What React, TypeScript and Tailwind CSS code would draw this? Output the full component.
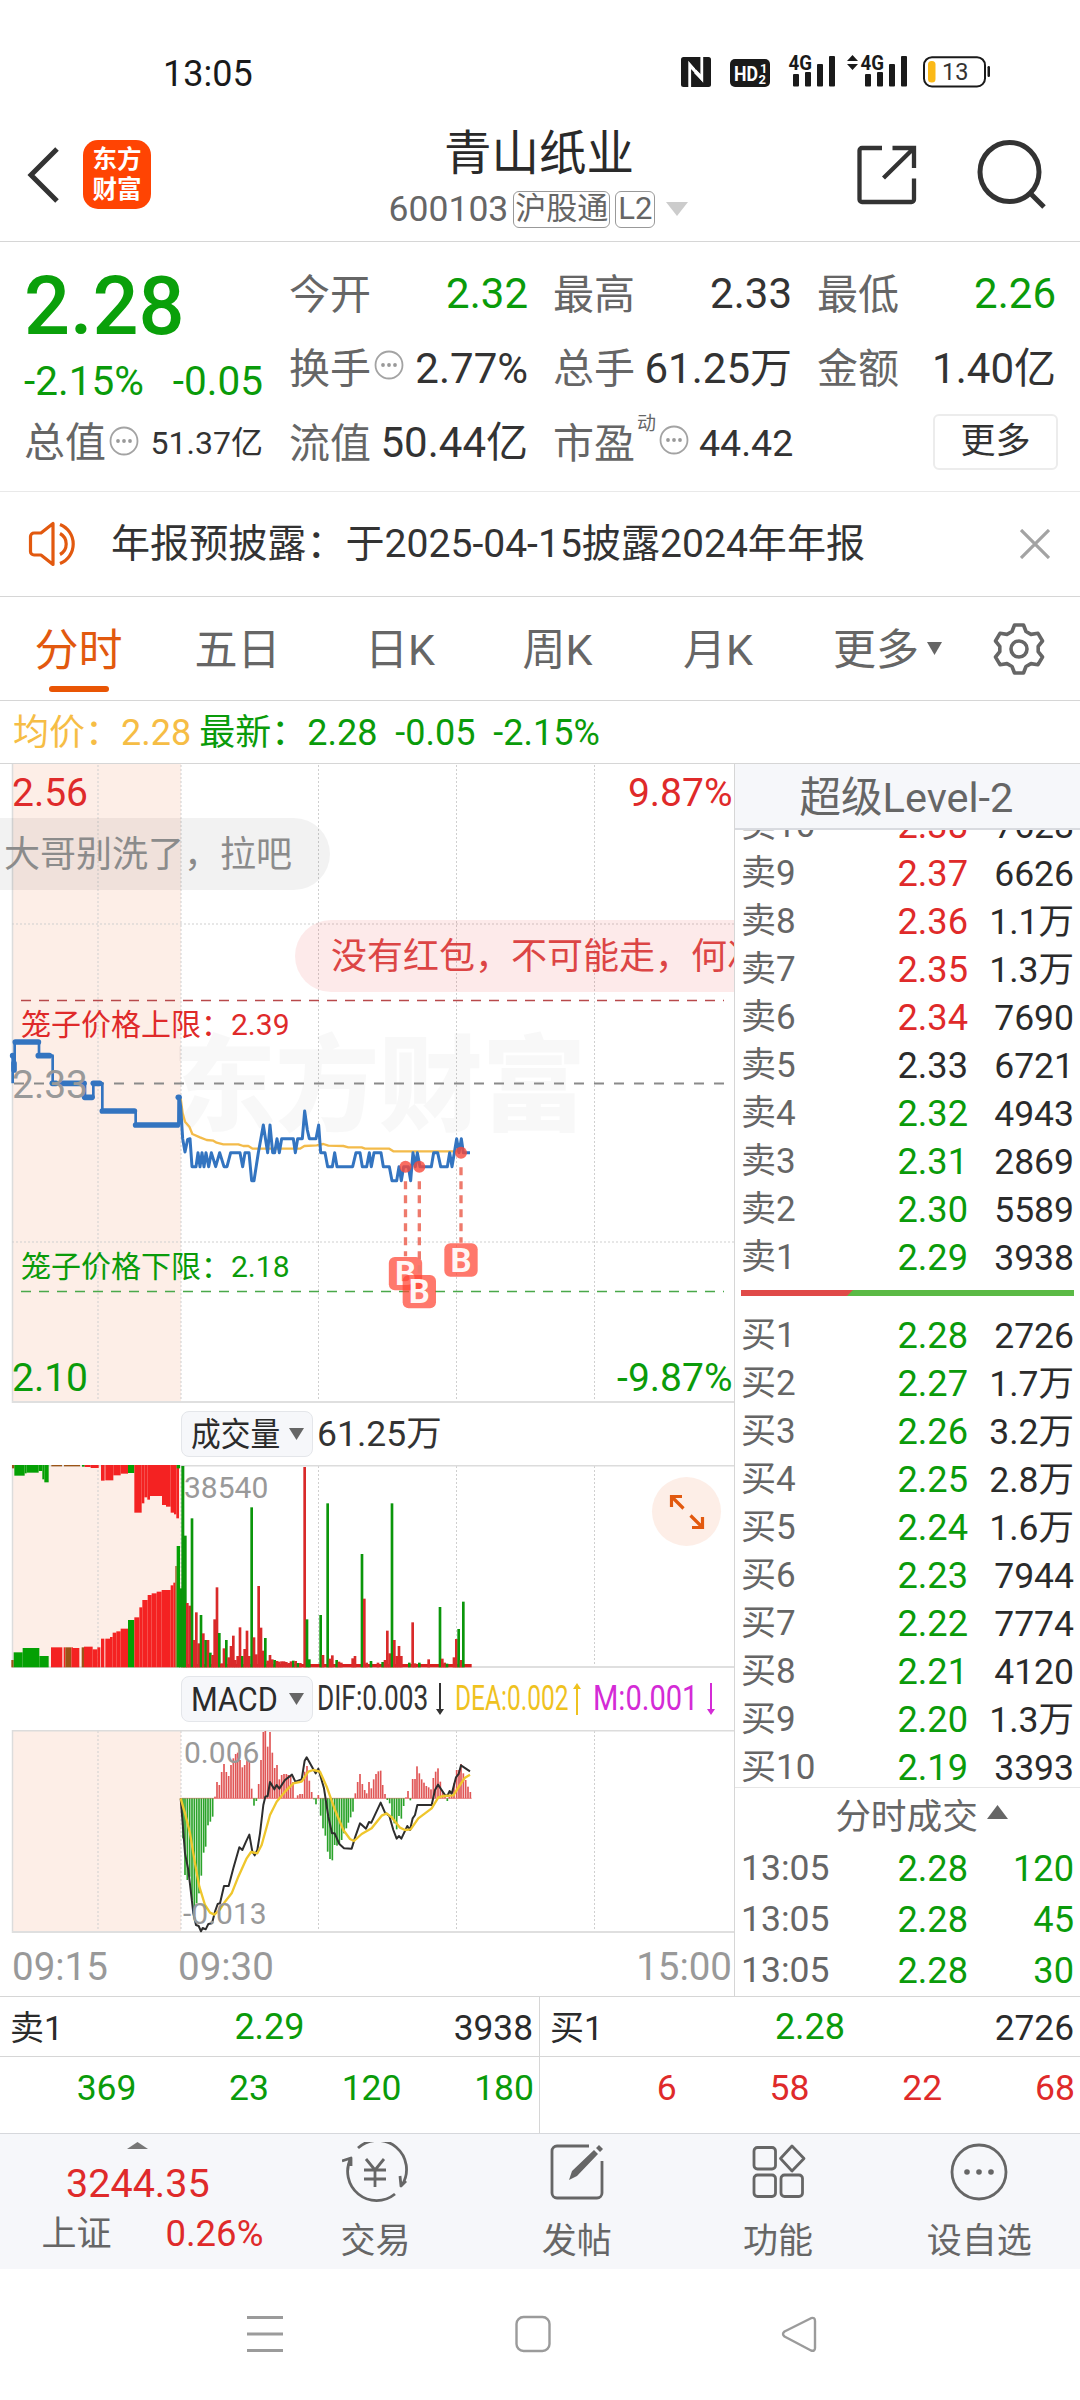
import React from "react";

const GREEN = "#0a9b0a";
const RED = "#df2a2a";

type Seg = [number, number, number, "r" | "g" | "m"];
const FILL = { r: "#f42222", g: "#04a004", m: "#9c5416" };

/* Pre-open auction volume: x0, x1, top edge, colour */
const auctionBottom: Seg[] = [
  [34, 41, 780, "m"], [41, 68, 757, "g"], [68, 118, 744, "g"], [118, 146, 768, "g"],
  [153, 187, 742, "r"], [191, 196, 742, "r"], [196, 214, 742, "m"], [214, 219, 742, "r"], [219, 238, 744, "r"],
  [245, 252, 742, "m"], [252, 278, 740, "r"], [278, 292, 748, "r"], [292, 301, 742, "r"],
  [303, 313, 716, "r"], [316, 330, 716, "r"], [330, 338, 711, "r"], [338, 349, 698, "r"], [349, 362, 694, "r"],
  [362, 384, 686, "r"], [384, 403, 660, "g"], [403, 418, 652, "r"], [418, 427, 622, "r"], [427, 443, 600, "r"],
  [443, 455, 585, "r"], [455, 470, 580, "r"], [470, 485, 575, "r"], [485, 512, 570, "r"], [512, 520, 556, "r"],
  [520, 526, 548, "r"], [526, 530, 498, "m"], [530, 540, 438, "g"],
];
/* Unmatched auction volume hanging from the top: x0, x1, bottom edge, colour */
const auctionTop: Seg[] = [
  [36, 43, 205, "m"], [43, 74, 227, "g"], [74, 80, 220, "g"], [80, 116, 218, "g"], [116, 127, 213, "g"],
  [127, 133, 238, "g"], [133, 146, 247, "g"], [154, 186, 199, "m"], [192, 240, 199, "m"], [246, 254, 200, "g"],
  [254, 272, 201, "r"], [272, 296, 204, "r"], [303, 314, 242, "r"], [316, 340, 241, "r"], [340, 362, 226, "r"],
  [362, 384, 221, "r"], [384, 403, 219, "g"], [403, 425, 338, "r"], [425, 433, 310, "r"], [433, 442, 292, "r"],
  [442, 450, 299, "r"], [450, 486, 288, "r"], [486, 498, 315, "r"], [498, 512, 320, "r"], [512, 522, 338, "r"],
  [522, 529, 343, "r"], [529, 537, 355, "r"], [530, 540, 205, "g"],
];
/* Minute volume bars: x centre, top edge, colour */
type Bar = [number, number, "r" | "g"];
const volume: Bar[] = [
  [541, 565, "g"], [548, 198, "g"], [555, 407, "g"], [562, 609, "r"], [569, 617, "r"], [576, 355, "g"], [583, 720, "r"],
  [589, 637, "r"], [596, 730, "r"], [603, 645, "g"], [610, 700, "r"], [617, 720, "g"], [624, 720, "r"], [631, 758, "g"],
  [638, 765, "r"], [644, 658, "r"], [651, 562, "r"], [658, 699, "g"], [665, 790, "r"], [672, 745, "r"], [679, 720, "g"],
  [686, 772, "r"], [693, 738, "r"], [700, 707, "r"], [706, 780, "r"], [713, 768, "r"], [720, 682, "r"], [727, 768, "g"],
  [734, 747, "r"], [741, 692, "r"], [748, 768, "r"], [755, 322, "g"], [762, 712, "r"], [769, 763, "r"], [776, 558, "r"],
  [783, 683, "r"], [790, 752, "r"], [796, 714, "g"], [803, 782, "r"], [810, 765, "r"], [817, 778, "r"], [824, 780, "g"],
  [831, 783, "r"], [838, 785, "r"], [845, 784, "r"], [852, 784, "r"], [859, 786, "r"], [866, 789, "r"], [873, 784, "r"],
  [880, 782, "g"], [887, 783, "r"], [894, 789, "g"], [901, 789, "r"], [914, 201, "r"], [921, 658, "g"], [928, 778, "g"],
  [962, 645, "g"], [969, 765, "r"], [983, 310, "g"], [990, 776, "r"], [997, 766, "r"], [1010, 780, "g"], [1017, 785, "r"],
  [1024, 788, "r"], [1058, 775, "r"], [1065, 768, "r"], [1086, 462, "g"], [1093, 596, "r"], [1100, 788, "r"],
  [1113, 783, "g"], [1134, 788, "r"], [1148, 786, "g"], [1155, 780, "r"], [1162, 692, "r"], [1169, 760, "r"],
  [1176, 310, "g"], [1183, 720, "r"], [1190, 768, "r"], [1197, 738, "r"], [1204, 768, "r"], [1228, 788, "g"],
  [1238, 667, "r"], [1245, 790, "r"], [1258, 788, "g"], [1286, 778, "r"], [1320, 621, "g"], [1327, 776, "r"],
  [1334, 788, "r"], [1341, 791, "g"], [1362, 772, "r"], [1369, 717, "r"], [1376, 687, "g"], [1383, 780, "r"], [1390, 605, "g"],
];
/* MACD histogram: x centre, end of bar; the zero line is at 325 */
const histogram: [number, number][] = [
  [39, 445], [45, 555], [52, 570], [59, 560], [66, 630], [73, 655], [80, 640], [87, 610], [94, 557], [101, 488], [107, 470],
  [114, 406], [121, 395], [128, 380], [135, 320], [141, 276], [148, 285], [155, 246], [162, 222], [169, 246], [176, 258],
  [183, 225], [190, 205], [197, 192], [203, 188], [210, 210], [217, 232], [224, 225], [231, 212], [238, 215], [245, 296],
  [252, 347], [259, 333], [266, 282], [273, 210], [280, 126], [286, 123], [293, 170], [300, 126], [307, 188], [314, 234],
  [321, 225], [328, 268], [335, 255], [342, 252], [349, 252], [355, 255], [362, 258], [369, 276], [383, 316], [390, 312],
  [397, 312], [404, 245], [411, 228], [418, 272], [425, 306], [432, 328], [438, 343], [445, 315], [452, 377], [459, 415],
  [466, 437], [473, 485], [480, 507], [487, 511], [494, 465], [501, 467], [508, 462], [515, 450], [522, 430], [529, 415],
  [535, 398], [542, 382], [549, 365], [556, 310], [563, 276], [570, 252], [577, 282], [584, 300], [590, 310], [597, 276],
  [604, 295], [611, 268], [618, 252], [625, 244], [632, 242], [638, 285], [645, 312], [652, 330], [659, 340], [666, 380],
  [673, 400], [680, 418], [687, 378], [694, 386], [701, 348], [708, 322], [714, 303], [721, 331], [728, 267], [735, 267],
  [741, 229], [748, 250], [755, 268], [762, 278], [769, 288], [776, 292], [783, 298], [790, 264], [797, 245], [804, 235],
  [811, 275], [818, 305], [825, 318], [832, 333], [838, 320], [845, 318], [852, 280], [860, 240], [867, 240], [873, 222],
  [880, 250], [887, 270], [894, 290], [901, 306],
];

const difLine =
  "32,325 38,400 45,490 55,540 62,600 70,670 78,705 86,708 93,724 98,714 107,718 115,702 126,700 135,665 143,642 150,640 162,588 176,588 190,535 208,472 217,480 228,455 238,434 247,485 254,496 262,480 270,430 280,345 286,320 293,318 300,276 313,298 320,285 328,296 345,270 366,254 376,275 395,268 404,212 410,202 430,238 437,250 445,236 462,295 475,380 486,430 494,430 508,462 522,475 545,476 556,440 570,400 588,416 597,396 604,398 632,338 645,368 658,378 670,420 680,446 687,438 694,446 712,408 720,420 728,385 735,375 742,345 785,345 795,300 804,284 825,315 832,318 839,303 845,312 858,262 866,252 873,226 900,244";
const deaLine =
  "32,325 45,370 60,430 75,520 88,590 105,645 120,668 133,674 150,658 165,635 185,610 205,560 230,505 243,486 262,490 275,465 300,375 320,335 345,305 370,280 395,275 415,245 430,240 450,245 470,290 495,360 520,420 540,447 552,453 575,432 605,415 635,377 650,370 665,382 690,413 705,420 722,418 745,385 785,355 805,322 820,318 850,316 870,285 885,263 900,254";
const auctionPrice =
  "38,160 38,77 44,120 44,36 117,36 117,77 158,77 158,160 255,160 255,202 280,202 280,160 307,160 307,243 407,243 407,285 536,285 536,202";
const auctionSteps = [
  [38, 77, 38, 77], [42, 100, 42, 120], [46, 36, 115, 36], [115, 77, 148, 77], [157, 160, 168, 160], [188, 160, 252, 160], [254, 202, 276, 202],
  [280, 160, 299, 160], [307, 243, 403, 243], [407, 285, 532, 285], [535, 202, 537, 202],
];
const sessionPrice =
  "536,285 538,202 542,230 548,326 555,366 563,328 570,326 576,410 588,410 594,368 600,410 606,368 612,410 618,368 626,410 634,368 647,410 659,368 672,410 681,410 692,368 720,368 728,410 735,368 747,368 755,452 762,452 775,368 790,285 803,368 810,285 818,368 824,368 831,326 838,368 845,326 880,326 886,368 893,326 907,326 914,243 922,300 928,326 948,326 956,285 962,368 975,368 983,410 997,410 1004,368 1011,410 1058,410 1068,368 1080,368 1087,410 1100,410 1108,368 1114,410 1122,368 1143,368 1150,410 1168,410 1176,452 1190,452 1197,410 1204,452 1211,410 1225,410 1232,452 1239,368 1246,410 1252,368 1260,410 1294,410 1301,368 1313,368 1322,410 1342,410 1349,368 1356,410 1363,368 1370,326 1377,368 1384,326 1390,368 1410,368";
const averagePrice =
  "542,205 548,250 555,275 568,290 577,312 600,322 620,330 640,332 650,338 670,343 715,343 730,348 745,348 758,356 900,356 913,348 950,346 970,342 985,347 1030,348 1045,352 1085,352 1095,356 1168,356 1180,364 1375,364";

function Grid({ height, top }: { height: number; top?: boolean }) {
  return (
    <g>
      <rect x="12" y="0" width="169" height={height} fill="#fdeee7" />
      {[98, 181, 318.5, 456.5, 594.5].map((x) => (
        <line key={x} x1={x} x2={x} y1="1" y2={height} stroke="#cfcfcf" strokeWidth="1" strokeDasharray="2 2" />
      ))}
      <line x1="12.5" x2="12.5" y1="0" y2={height} stroke="#dcdcdc" strokeWidth="1.5" />
      {top && <line x1="12" x2="734" y1="0.7" y2="0.7" stroke="#dcdcdc" strokeWidth="1.5" />}
      <line x1="12" x2="734" y1={height - 1} y2={height - 1} stroke="#dfdfdf" strokeWidth="2" />
    </g>
  );
}

function Marker({ x, y, by }: { x: number; y: number; by: number }) {
  return (
    <g>
      <line x1={x} x2={x} y1={y + 44} y2={by - 52} stroke="#ee7a6c" strokeWidth="10" strokeDasharray="24 18" />
      <circle cx={x} cy={y} r="18" fill="#f8483a" fillOpacity="0.8" />
      <rect x={x - 50} y={by - 50} width="100" height="100" rx="18" fill="#ff4433" fillOpacity="0.72" />
      <text x={x} y={by + 35} textAnchor="middle" fontSize="99" fontWeight="700" fill="#fff" fillOpacity="0.95">B</text>
    </g>
  );
}

function PriceChart() {
  return (
    <div className="relative h-[639px] overflow-hidden">
      <svg width="734" height="639" viewBox="0 0 734 639" className="block">
        <Grid height={639} />
        {[160, 478].map((y) => (
          <line key={y} x1="12" x2="734" y1={y} y2={y} stroke="#cfcfcf" strokeWidth="1" strokeDasharray="2 2" />
        ))}
        <text x="172" y="359" fontSize="104" fontWeight="900" fill="#888" fillOpacity="0.055" textLength="414">东方财富</text>
        <line x1="14" x2="734" y1="319.5" y2="319.5" stroke="#8a8a8a" strokeWidth="1.8" strokeDasharray="10 10" />
        <line x1="21" x2="724" y1="236.5" y2="236.5" stroke="#b8494b" strokeWidth="1.6" strokeDasharray="10 8" />
        <line x1="21" x2="724" y1="527.5" y2="527.5" stroke="#4aa84a" strokeWidth="1.6" strokeDasharray="10 8" />
        <g transform="translate(0 266) scale(0.33333)" fill="none" strokeLinejoin="round">
          <polyline points={averagePrice} stroke="#f3bb4a" strokeWidth="7" />
          <polyline points={auctionPrice} stroke="#3374c0" strokeWidth="8" />
          {auctionSteps.map(([x1, y1, x2, y2], i) => (
            <line key={i} x1={x1} y1={y1} x2={x2 + 0.1} y2={y2} stroke="#3374c0" strokeWidth="17" strokeLinecap="round" />
          ))}
          <polyline points={sessionPrice} stroke="#3374c0" strokeWidth="9" />
        </g>
        <text x="21" y="271" fontSize="30" fill={RED}>笼子价格上限：2.39</text>
        <text x="21" y="512.5" fontSize="30" fill={GREEN}>笼子价格下限：2.18</text>
        <text x="12" y="42" fontSize="39" fill={RED}>2.56</text>
        <text x="732.5" y="42" fontSize="39" fill={RED} textAnchor="end">9.87%</text>
        <text x="12" y="334" fontSize="39" fill="#999">2.33</text>
        <text x="12" y="627" fontSize="39" fill={GREEN}>2.10</text>
        <text x="732.5" y="627" fontSize="39" fill={GREEN} textAnchor="end">-9.87%</text>
        <g transform="translate(0 266) scale(0.33333)">
          <Marker x={1216.5} y={410} by={731} />
          <Marker x={1258} y={410} by={785} />
          <Marker x={1383} y={368} by={690} />
        </g>
      </svg>
      <div className="absolute top-[54px] -left-10 flex h-[72px] items-center rounded-full bg-black/5 pt-[3px] pr-[38px] pl-[44px] text-[36px] text-[#8b8b8b]">
        大哥别洗了，拉吧
      </div>
      <div className="absolute top-[156px] left-[295px] flex h-[72px] w-[600px] items-center rounded-full bg-[#ee3333]/10 pt-[3px] pl-[36px] text-[36px] whitespace-nowrap text-[#dc4545]">
        没有红包，不可能走，何况
      </div>
    </div>
  );
}

function VolumeChart() {
  return (
    <div className="relative h-[203px]">
      <svg width="734" height="203" viewBox="0 0 734 203" className="block">
        <Grid height={203} top />
        <g transform="translate(0 -65) scale(0.33333)">
          {auctionTop.map(([a, b, y, c], i) => <rect key={i} x={a} y="195" width={b - a} height={y - 195} fill={FILL[c]} />)}
          {auctionBottom.map(([a, b, y, c], i) => <rect key={i} x={a} y={y} width={b - a} height={802 - y} fill={FILL[c]} />)}
          <rect x="545" y="792" width="870" height="10" fill="#d92020" />
          {volume.map(([x, y, c], i) => (
            <rect key={i} x={x - 4} y={y} width={x < 560 ? 9 : 8} height={802 - y} fill={c === "r" ? "#d92a2a" : "#0b960b"} />
          ))}
        </g>
        <text x="184" y="33" fontSize="30" fill="#999">38540</text>
      </svg>
      <div className="absolute top-[12px] left-[652px] flex size-[69px] items-center justify-center rounded-full bg-[#fdeee7]">
        <svg width="36" height="38" viewBox="0 0 36 38" fill="none" stroke="#e2590f" strokeWidth="3.200">
          <path d="M2.500 14V3.500H13M3 4L14.500 15.500M33.500 24V34.500H23M33 34L21.500 22.500" />
        </svg>
      </div>
    </div>
  );
}

function MacdChart() {
  return (
    <div className="h-[203px]">
      <svg width="734" height="203" viewBox="0 0 734 203" className="block">
        <Grid height={203} top />
        <g transform="translate(170 -40) scale(0.33333)" fill="none" strokeLinejoin="round">
          <line x1="32" x2="905" y1="325" y2="325" stroke="#e88" strokeWidth="3" />
          {histogram.map(([x, y], i) => (
            <rect key={i} x={x - 2.5} y={Math.min(y, 325)} width="5" height={Math.abs(325 - y)} fill={y < 325 ? "#e05656" : "#2ba32b"} />
          ))}
          <polyline points={difLine} stroke="#2e2e2e" strokeWidth="6" />
          <polyline points={deaLine} stroke="#efc62c" strokeWidth="7" />
        </g>
        <text x="184" y="33" fontSize="30" fill="#999">0.006</text>
        <text x="183" y="193.500" fontSize="30" fill="#999">-0.013</text>
      </svg>
    </div>
  );
}

function Triangle({ className, up }: { className: string; up?: boolean }) {
  return (
    <svg viewBox="0 0 20 14" preserveAspectRatio="none" className={className} fill="currentColor">
      <path d={up ? "M10 0L20 14H0Z" : "M0 0H20L10 14Z"} />
    </svg>
  );
}

function InfoDots() {
  return (
    <svg width="30" height="30" viewBox="0 0 30 30" fill="none" className="shrink-0">
      <circle cx="15" cy="15" r="13.500" stroke="#a3a3a3" strokeWidth="1.800" />
      {[9, 15, 21].map((x) => <circle key={x} cx={x} cy="15" r="1.900" fill="#999" />)}
    </svg>
  );
}

function Picker({ children }: { children: React.ReactNode }) {
  return (
    <div className="flex h-[46px] w-[132px] items-center justify-between rounded-lg border border-[#e4e6ea] bg-[#f6f7fa] pr-[8px] pl-[9px] text-[#2b2b2b]">
      {children}
      <Triangle className="h-3 w-[15px] text-[#666]" />
    </div>
  );
}

function Arrow({ up, className }: { up?: boolean; className: string }) {
  return (
    <svg width="8" height="32" viewBox="0 0 8 32" className={className} fill="currentColor">
      <g transform={up ? "rotate(180 4 16)" : undefined}>
        <path d="M3 0H5V26H8L4 32L0 26H3Z" />
      </g>
    </svg>
  );
}

function Signal() {
  return (
    <svg width="48" height="35" viewBox="-1 -2 48 35" fill="#1a1a1a" className="mt-[-2px] ml-[-1px]">
      <text x="-0.500" y="15.500" fontSize="20" fontWeight="700" textLength="23.500" lengthAdjust="spacingAndGlyphs">4G</text>
      <rect x="4" y="20" width="6" height="12.500" rx="1" />
      <rect x="16" y="18" width="6" height="14.500" rx="1" />
      <rect x="28" y="10" width="6" height="22.500" rx="1" />
      <rect x="40" y="2" width="6" height="30.500" rx="1" />
    </svg>
  );
}

function StatusBar() {
  return (
    <div className="flex h-[142px] items-start justify-between pr-[89px] pl-[163px]">
      <div className="mt-[50px] text-[36px] leading-[48px] text-[#1a1a1a]">13:05</div>
      <div className="mt-[54px] flex h-[34px] items-start">
        <svg width="30" height="30" viewBox="0 0 30 30" className="mt-[3px]">
          <rect width="30" height="30" rx="2.500" fill="#1a1a1a" />
          <path d="M8.700 30V7.500L20.800 22V0" fill="none" stroke="#fff" strokeWidth="2.800" />
          <path d="M8 5.500L14 11.500L13 15L8 10ZM21.500 24.500L13 16L15 12.500L21.500 19Z" fill="#fff" />
        </svg>
        <svg width="40" height="28" viewBox="0 0 40 28" className="mt-[5px] ml-[19px]">
          <rect width="40" height="28" rx="5" fill="#1a1a1a" />
          <text x="4" y="21.500" fontSize="21" fontWeight="700" fill="#fff" textLength="24" lengthAdjust="spacingAndGlyphs">HD</text>
          <text x="30" y="13.500" fontSize="13" fontWeight="700" fill="#fff">1</text>
          <text x="28.500" y="25" fontSize="13" fontWeight="700" fill="#fff">2</text>
        </svg>
        <div className="ml-[19px]"><Signal /></div>
        <svg width="11" height="16" viewBox="0 0 11 16" fill="#1a1a1a" className="mt-[1px] ml-[11px]">
          <path d="M5.500 0L11 6H0ZM5.500 15L11 9H0Z" />
        </svg>
        <div className="ml-[3px]"><Signal /></div>
        <svg width="68" height="32" viewBox="0 0 68 32" className="mt-[2px] ml-[15px]" fill="none">
          <rect x="1" y="1.200" width="61" height="29.300" rx="8" stroke="#1a1a1a" strokeWidth="2" />
          <rect x="5" y="5" width="7.500" height="21.500" rx="3.500" fill="#fbb917" />
          <rect x="64.500" y="10" width="2.500" height="11" rx="1.200" fill="#1a1a1a" />
          <text x="19" y="24" fontSize="23.500" fill="#333">13</text>
        </svg>
      </div>
    </div>
  );
}

function Header() {
  return (
    <header className="relative flex h-[100px] items-start justify-between border-b border-[#d6d6d6] pr-[33px] pl-[27px]">
      <div className="flex">
        <svg width="32" height="56" viewBox="0 0 32 56" fill="none" stroke="#333" strokeWidth="5" className="mt-[5px]">
          <path d="M30 2L4 28L30 54" />
        </svg>
        <div className="mt-[-2px] ml-6 flex h-[69px] w-[68px] flex-col items-center justify-center rounded-[15px] bg-[#ff4403] pt-[1px] text-[24.500px] leading-[30px] font-bold text-white">
          <span>东方</span>
          <span>财富</span>
        </div>
      </div>
      <div className="absolute inset-x-0 top-[-19px] flex flex-col items-center">
        <h1 className="mr-[2px] text-[47.500px] leading-[62px] text-[#2a2a2a]">青山纸业</h1>
        <div className="mt-[5px] mr-[3px] flex items-center text-[35.500px] leading-[38px] text-[#666]">
          <span>600103</span>
          <span className="ml-[5px] flex h-[37px] items-center rounded-[6px] border-[1.500px] border-[#999] px-[1px] text-[31px]">沪股通</span>
          <span className="ml-[5px] flex h-[37px] items-center rounded-[6px] border-[1.500px] border-[#999] px-[2px] text-[31px]">L2</span>
          <Triangle className="ml-[11px] h-[14px] w-[22px] text-[#ccc]" />
        </div>
      </div>
      <div className="flex">
        <svg width="60" height="60" viewBox="0 0 60 60" fill="none" stroke="#333" strokeWidth="4.300" className="mt-[3px]">
          <path d="M25 3H5a2.500 2.500 0 0 0-2.500 2.500V54.500A2.500 2.500 0 0 0 5 57H54.500A2.500 2.500 0 0 0 57 54.500V33.500M35.500 3H57V23M57 3L26.500 33" />
        </svg>
        <svg width="70" height="72" viewBox="0 0 70 72" fill="none" stroke="#333" strokeWidth="5" className="mt-[-3px] ml-[60px]">
          <circle cx="32.500" cy="33" r="29.500" />
          <path d="M53 54L67 68" />
        </svg>
      </div>
    </header>
  );
}

function Cell({ label, value, color = "text-[#333]", info }: { label: string; value: string; color?: string; info?: boolean }) {
  return (
    <div className="flex h-[74.500px] w-[239px] items-center justify-between whitespace-nowrap">
      <span className="flex items-center pt-[2px] text-[41px] text-[#666]">
        {label}
        {info && <span className="mt-[-9px] ml-[3px]"><InfoDots /></span>}
      </span>
      <span className={"text-[42px] " + color}>{value}</span>
    </div>
  );
}

function Quote() {
  return (
    <section className="flex h-[250px] gap-[26px] border-b border-[#e9e9e9] pt-[15px] pl-[24px]">
      <div className="w-[239px]">
        <div className="h-[98px] text-[81px] leading-[100px] font-medium text-[#0aa00a]">2.28</div>
        <div className="flex h-[51px] items-center justify-between pt-[1px] text-[40.500px] text-[#0a9b0a]">
          <span>-2.15%</span>
          <span>-0.05</span>
        </div>
        <div className="flex h-[74px] items-center justify-between pt-[1px] whitespace-nowrap">
          <span className="flex items-center pt-[1px] text-[41px] text-[#666]">
            总值<span className="mt-[-7px] ml-[3px]"><InfoDots /></span>
          </span>
          <span className="text-[32px] text-[#333]">51.37亿</span>
        </div>
      </div>
      <div className="grid h-[224px] grid-cols-[239px_239px_239px] gap-x-[25px]">
        <Cell label="今开" value="2.32" color="text-[#0a9b0a]" />
        <Cell label="最高" value="2.33" />
        <Cell label="最低" value="2.26" color="text-[#0a9b0a]" />
        <Cell label="换手" value="2.77%" info />
        <Cell label="总手" value="61.25万" />
        <Cell label="金额" value="1.40亿" />
        <Cell label="流值" value="50.44亿" />
        <div className="flex h-[74.500px] items-center text-[41px] whitespace-nowrap text-[#666]">
          <span className="pt-[2px]">市盈</span>
          <span className="mt-[-38px] ml-[2px] text-[19px]">动</span>
          <span className="mt-[-8px] ml-[3px]"><InfoDots /></span>
          <span className="ml-[10px] text-[37.500px] text-[#333]">44.42</span>
        </div>
        <div className="flex h-[74.500px] items-center justify-end pb-[4px]">
          <span className="mr-[-2px] flex h-[56px] w-[125px] items-center justify-center rounded-md border-2 border-[#ececec] pt-[1px] text-[35px] text-[#333]">更多</span>
        </div>
      </div>
    </section>
  );
}

function Notice() {
  return (
    <div className="flex h-[105px] items-center border-b border-[#d6d6d6] pr-[30px] pl-[28px]">
      <svg width="54" height="46" viewBox="0 0 54 46" fill="none" stroke="#e2590f" strokeWidth="3.200" strokeLinejoin="round">
        <path d="M25 2.500V43.500L13 34H6a3.500 3.500 0 0 1-3.500-3.500V15.500A3.500 3.500 0 0 1 6 12H13ZM32 12.500a12 12 0 0 1 0 21M32 3.500a21 21 0 0 1 0 39" />
      </svg>
      <span className="ml-[29px] grow pt-[1px] text-[39.100px] text-[#333]">年报预披露：于2025-04-15披露2024年年报</span>
      <svg width="30" height="30" viewBox="0 0 30 30" stroke="#a3a3a3" strokeWidth="3.200">
        <path d="M1 1L29 29M29 1L1 29" />
      </svg>
    </div>
  );
}

function Tabs() {
  return (
    <nav className="flex h-[104px] items-center border-b border-[#d6d6d6] text-center text-[43px] text-[#666]">
      <div className="relative flex h-full w-[157px] items-center justify-center pt-[6px] text-[44px] text-[#e2590f]">
        分时
        <i className="absolute bottom-[8px] left-[49px] h-[6px] w-[60px] rounded-full bg-[#e95504]" />
      </div>
      <div className="w-[161px] pt-[5px]">五日</div>
      <div className="w-[164px] pt-[5px]">日K</div>
      <div className="w-[151px] pt-[5px]">周K</div>
      <div className="w-[170px] pt-[5px]">月K</div>
      <div className="flex w-[167px] items-center justify-center gap-2 pl-[2px]">
        <span className="pt-[5px]">更多</span>
        <Triangle className="h-[13px] w-[15px] text-[#666]" />
      </div>
      <svg width="54" height="54" viewBox="0 0 54 54" fill="none" stroke="#666" strokeWidth="3.600" strokeLinejoin="round" className="ml-[22px]">
        <path d="M22.500 3H31.500L34 9.500L39 12.400L46 11.300L50.500 19L46.200 24.300V29.700L50.500 35L46 42.700L39 41.600L34 44.500L31.500 51H22.500L20 44.500L15 41.600L8 42.700L3.500 35L7.800 29.700V24.300L3.500 19L8 11.300L15 12.400L20 9.500Z" />
        <circle cx="27" cy="27" r="8" />
      </svg>
    </nav>
  );
}

type Level = [string, string, string, string];
const asks: Level[] = [
  ["卖10", "2.38", "7628", "text-[#df2a2a]"], ["卖9", "2.37", "6626", "text-[#df2a2a]"], ["卖8", "2.36", "1.1万", "text-[#df2a2a]"],
  ["卖7", "2.35", "1.3万", "text-[#df2a2a]"], ["卖6", "2.34", "7690", "text-[#df2a2a]"], ["卖5", "2.33", "6721", "text-[#2b2b2b]"],
  ["卖4", "2.32", "4943", "text-[#0a9b0a]"], ["卖3", "2.31", "2869", "text-[#0a9b0a]"], ["卖2", "2.30", "5589", "text-[#0a9b0a]"],
  ["卖1", "2.29", "3938", "text-[#0a9b0a]"],
];
const bids: Level[] = [
  ["买1", "2.28", "2726", ""], ["买2", "2.27", "1.7万", ""], ["买3", "2.26", "3.2万", ""], ["买4", "2.25", "2.8万", ""],
  ["买5", "2.24", "1.6万", ""], ["买6", "2.23", "7944", ""], ["买7", "2.22", "7774", ""], ["买8", "2.21", "4120", ""],
  ["买9", "2.20", "1.3万", ""], ["买10", "2.19", "3393", ""],
];

function BookRow({ row }: { row: Level }) {
  return (
    <div className="flex h-[48px] shrink-0 items-center pr-[6px] pl-[6px] text-[35px] whitespace-nowrap">
      <span className="w-[120px] text-[#666]">{row[0]}</span>
      <span className={"w-[107px] text-right text-[36.200px] " + (row[3] || "text-[#0a9b0a]")}>{row[1]}</span>
      <span className="grow text-right text-[35.500px] text-[#2b2b2b]">{row[2]}</span>
    </div>
  );
}

function OrderBook() {
  return (
    <aside className="flex w-[346px] flex-col border-l-[1.500px] border-[#d6d6d6]">
      <div className="z-10 flex h-[66px] shrink-0 items-center justify-center border-b-2 border-[#d9dbe0] bg-[#f6f7fa] pt-[4px] pr-[2px] text-[41.500px] text-[#666]">超级Level-2</div>
      <div className="flex h-[452px] shrink-0 flex-col justify-end overflow-hidden">
        {asks.map((r) => <BookRow key={r[0]} row={r} />)}
      </div>
      <svg width="333" height="6" viewBox="0 0 333 6" className="mt-[8px] ml-[6px] shrink-0">
        <rect width="333" height="6" fill="#5bba45" />
        <path d="M0 0H112L106 6H0Z" fill="#e04a48" />
      </svg>
      <div className="mt-[16px] flex flex-col">
        {bids.map((r) => <BookRow key={r[0]} row={r} />)}
      </div>
      <div className="mt-[-5px] flex h-[59px] items-center justify-center gap-[9px] border-t border-[#e6e6e6] pt-[5px] pl-[28px] text-[35.700px] text-[#666]">
        分时成交
        <Triangle up className="mt-[-11px] h-[14px] w-[21px]" />
      </div>
      <div className="mt-[2px]">
        {["120", "45", "30"].map((n) => (
          <div key={n} className="flex h-[51px] items-center pr-[6px] pl-[6px] text-[36.200px] text-[#0a9b0a]">
            <span className="w-[120px] text-[35.500px] text-[#666]">13:05</span>
            <span className="w-[107px] text-right">2.28</span>
            <span className="grow text-right">{n}</span>
          </div>
        ))}
      </div>
    </aside>
  );
}

function BestSide({ name, price, size, queue, color, className }: { name: string; price: string; size: string; queue: string[]; color: string; className: string }) {
  return (
    <div className={"w-[540px] " + className}>
      <div className="flex h-[60px] items-center justify-between border-b border-[#d6d6d6] pt-[3px] pr-[6px] pl-[10px] text-[35.300px] text-[#2b2b2b]">
        <span className="w-[82px] text-[34px]">{name}</span>
        <span className="text-[36px] text-[#0a9b0a]">{price}</span>
        <span className="w-[86px] text-right">{size}</span>
      </div>
      <div className={"grid h-[76px] grid-cols-4 pr-[5px] pl-[4px] text-right text-[35.500px] leading-[63px] " + color}>
        {queue.map((q) => <span key={q}>{q}</span>)}
      </div>
    </div>
  );
}

function NavItem({ label, children }: { label: string; children: React.ReactNode }) {
  return (
    <div className="flex w-[201.500px] flex-col items-center">
      <svg width="66" height="60" viewBox="-33 -30 66 60" fill="none" stroke="#666" strokeWidth="2.800" strokeLinejoin="round" className="mt-[8px]">{children}</svg>
      <span className="mt-[15px] text-[35px] leading-[50px]">{label}</span>
    </div>
  );
}

function BottomNav() {
  return (
    <div className="flex h-[136px] border-t-[1.500px] border-[#d6d8dc] bg-[#f6f7fa] text-[#666]">
      <div className="flex w-[275px] flex-col items-center text-[#df2a2a]">
        <Triangle up className="mt-[8px] h-[7px] w-[21px] text-[#777]" />
        <span className="mt-[10px] ml-[1px] text-[39.500px] leading-[50px]">3244.35</span>
        <div className="flex w-[222px] justify-between text-[36.500px] leading-[50px]">
          <span className="ml-[2px] pt-[1px] pl-[13px] text-[35px] text-[#666]">上证</span>
          <span className="mr-[-15px]">0.26%</span>
        </div>
      </div>
      <NavItem label="交易">
        <path d="M-17-24A29 29 0 0 1 27 13M20 22A29 29 0 0 1-24-14M-33-11L-24-14L-24-6M31 9L26 14L25 4" />
        <path d="M-9-13L0-2L9-13M0-2V15M-11-2H11M-11 7H11" />
      </NavItem>
      <NavItem label="发帖">
        <path d="M12-26H-20a5 5 0 0 0-5 5V21a5 5 0 0 0 5 5H20a5 5 0 0 0 5-5V-11" />
        <path d="M-8 8L-5-1L17-22L21-18L0 4ZM19-24L22-27L26-23L23-20Z" fill="#666" stroke="none" />
      </NavItem>
      <NavItem label="功能">
        <rect x="-24" y="-24.500" width="21.500" height="21.500" rx="3.500" />
        <rect x="-24" y="3" width="21.500" height="21.500" rx="3.500" />
        <rect x="3" y="3" width="21.500" height="21.500" rx="3.500" />
        <path d="M14-26L26-13.500L14-1L2.500-13.500Z" />
      </NavItem>
      <NavItem label="设自选">
        <circle r="27" />
        {[-12, 0, 12].map((x) => <circle key={x} cx={x} r="2.800" fill="#666" stroke="none" />)}
      </NavItem>
    </div>
  );
}

function SystemNav() {
  return (
    <div className="flex h-[132px] items-center pb-[2px] pl-[247px]">
      <svg width="36" height="38" viewBox="0 0 36 38" stroke="#9b9b9b" strokeWidth="2.800">
        <path d="M0 2.500H36M0 19H36M0 35.500H36" />
      </svg>
      <svg width="36" height="38" viewBox="0 0 36 38" fill="none" stroke="#9b9b9b" strokeWidth="2.400" className="ml-[232px]">
        <rect x="1.500" y="2" width="33" height="34" rx="7" />
      </svg>
      <svg width="36" height="38" viewBox="0 0 36 38" fill="none" stroke="#9b9b9b" strokeWidth="2.400" strokeLinejoin="round" className="ml-[230px]">
        <path d="M30 3.200L3.500 16.500Q0.500 19 3.500 21.500L30 35.500Q34 36.500 34 33V6Q34 2 30 3.200Z" />
      </svg>
    </div>
  );
}

export default function App() {
  return (
    <main className="h-[2400px] w-[1080px] overflow-hidden bg-white font-['Roboto','Noto_Sans_CJK_SC',sans-serif] leading-[1.2]">
      <StatusBar />
      <Header />
      <Quote />
      <Notice />
      <Tabs />
      <div className="flex h-[63px] items-center border-b border-[#d6d6d6] pt-[3px] pl-[13px] text-[36px] whitespace-pre text-[#0a9b0a]">
        <span className="text-[#f6bd45]">均价：2.28</span>
        <span className="ml-[8px]">最新：2.28  -0.05  -2.15%</span>
      </div>
      <div className="flex h-[1232px]">
        <section className="w-[734px]">
          <PriceChart />
          <div className="flex h-[62px] items-center pl-[181px]">
            <Picker><span className="w-[90px] origin-left scale-x-90 pt-[2px] text-[33px] whitespace-nowrap">成交量</span></Picker>
            <span className="ml-[4px] pt-[1px] text-[35.500px] text-[#333]">61.25万</span>
          </div>
          <VolumeChart />
          <div className="flex h-[62px] items-center pl-[181px] text-[35px]">
            <Picker><span className="w-[90px] origin-left scale-x-90 text-[34px]">MACD</span></Picker>
            <span className="ml-[4px] w-[112px] origin-left scale-x-[0.750] text-[#333]">DIF:0.003</span>
            <Arrow className="ml-[7px] text-[#333]" />
            <span className="ml-[11px] w-[112px] origin-left scale-x-[0.700] text-[#efc21f]">DEA:0.002</span>
            <Arrow up className="ml-[6px] text-[#efc21f]" />
            <span className="ml-[12px] w-[104px] origin-left scale-x-[0.830] text-[#d42bd6]">M:0.001</span>
            <Arrow className="ml-[10px] text-[#d42bd6]" />
          </div>
          <MacdChart />
          <div className="flex h-[63px] items-center pt-[6px] pr-[2px] pl-[12px] text-[38.500px] text-[#999]">
            <span className="w-[166px]">09:15</span>
            <span className="grow">09:30</span>
            <span>15:00</span>
          </div>
        </section>
        <OrderBook />
      </div>
      <div className="flex h-[137px] border-t border-[#d6d6d6]">
        <BestSide name="卖1" price="2.29" size="3938" queue={["369", "23", "120", "180"]} color="text-[#0a9b0a]" className="border-r border-[#d6d6d6]" />
        <BestSide name="买1" price="2.28" size="2726" queue={["6", "58", "22", "68"]} color="text-[#df2a2a]" className="" />
      </div>
      <BottomNav />
      <SystemNav />
    </main>
  );
}
